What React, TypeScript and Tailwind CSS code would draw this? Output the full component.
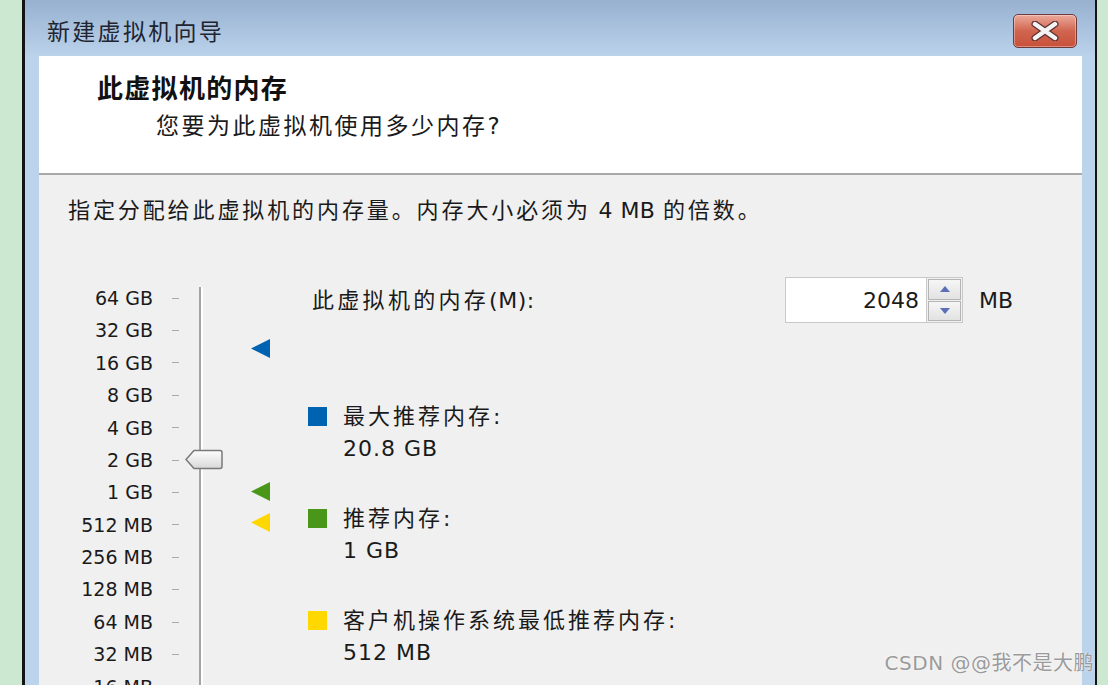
import React from "react";

const scale = [
  "64 GB", "32 GB", "16 GB", "8 GB", "4 GB", "2 GB", "1 GB",
  "512 MB", "256 MB", "128 MB", "64 MB", "32 MB", "16 MB",
];

const Marker = ({ color, top }: { color: string; top: string }) => (
  <svg className={`absolute left-[212px] ${top}`} width="19" height="19" viewBox="0 0 19 19">
    <polygon points="19,0 19,19 0,9.5" fill={color} />
  </svg>
);

const Legend = ({ color, title, value }: { color: string; title: string; value: string }) => (
  <div className="flex items-start gap-[16px]">
    <div className={`mt-[6px] h-[19px] w-[19px] ${color}`} />
    <div className="flex flex-col text-[22px] leading-[31.5px] text-[#1a1a1a]">
      <span className="tracking-[3px]">{title}</span>
      <span className="tracking-[1px]">{value}</span>
    </div>
  </div>
);

export default function App() {
  return (
    <div className="relative flex h-[685px] w-[1108px] overflow-hidden bg-[#cde8d0] font-['DejaVu_Sans','Noto_Sans_CJK_SC',sans-serif]">
      <div className="w-[22px] shrink-0" />
      <div className="w-[3px] shrink-0 bg-[#141414]" />

      {/* window */}
      <div className="flex w-[1070px] shrink-0 flex-col overflow-hidden bg-[#bcd3ec]">
        {/* title bar */}
        <div className="flex h-[56px] shrink-0 items-start justify-between bg-gradient-to-b from-[#97b1cf] to-[#bbd2eb] pl-[22px] pr-[18px]">
          <span className="mt-[17px] text-[23px] leading-[30px] tracking-[2.3px] text-[#1e2430]">新建虚拟机向导</span>
          <div className="mt-[14px] flex h-[34px] w-[64px] items-center justify-center rounded-[5px] border border-[#6e3a3a] bg-gradient-to-b from-[#eba99c] via-[#d0654f] to-[#c8503a] shadow-[inset_0_0_0_1px_rgba(255,255,255,0.35)]">
            <svg width="30" height="20" viewBox="0 0 30 20">
              <path d="M5 3 L25 17 M25 3 L5 17" stroke="#5b3030" strokeWidth="7" strokeLinecap="round" />
              <path d="M5 3 L25 17 M25 3 L5 17" stroke="#f4f4f4" strokeWidth="4.5" strokeLinecap="round" />
            </svg>
          </div>
        </div>

        <div className="flex flex-1">
          <div className="w-[14px] shrink-0" />
          <div className="flex flex-1 flex-col">
            {/* header */}
            <div className="h-[117px] shrink-0 bg-white pl-[58px] pt-[18px]">
              <div className="text-[26px] font-bold leading-[30px] tracking-[1.3px] text-[#111]">此虚拟机的内存</div>
              <div className="mt-[7px] pl-[59px] text-[23px] leading-[30px] tracking-[2.5px] text-[#1a1a1a]">
                您要为此虚拟机使用多少内存<span className="tracking-normal">?</span>
              </div>
            </div>
            <div className="h-[2px] shrink-0 bg-[#a8a8a8]" />

            {/* content */}
            <div className="flex-1 bg-[#f0f0f0]">
              <div className="pl-[29px] pt-[21px] text-[22px] leading-[30px] tracking-[2.9px] text-[#1a1a1a]">
                指定分配给此虚拟机的内存量。内存大小必须为<span className="tracking-[0.5px]"> 4 MB </span>的倍数。
              </div>

              <div className="mt-[51px] flex">
                {/* scale */}
                <div className="relative mt-[5px] w-[269px] shrink-0">
                  {scale.map((s) => (
                    <div key={s} className="flex h-[32.4px] items-center">
                      <span className="w-[114px] text-right text-[19px] text-[#1a1a1a]">{s}</span>
                      <span className="ml-[19px] h-px w-[7px] bg-[#a9a9a9]" />
                    </div>
                  ))}
                  <div className="absolute left-[160px] top-[5px] bottom-0 w-[4px] border-l-[2px] border-[#a3a3a3] bg-white" />
                  <svg className="absolute left-[146px] top-[167px]" width="38" height="21" viewBox="0 0 38 21">
                    <defs>
                      <linearGradient id="thumb" x1="0" y1="0" x2="0" y2="1">
                        <stop offset="0" stopColor="#fdfdfd" />
                        <stop offset="1" stopColor="#d8d8d8" />
                      </linearGradient>
                    </defs>
                    <path d="M1 10.5 L9 1.5 H35 Q37 1.5 37 3.5 V17.5 Q37 19.5 35 19.5 H9 Z" fill="url(#thumb)" stroke="#7a7a7a" strokeWidth="1.5" />
                  </svg>
                  <Marker color="#0063b1" top="top-[57px]" />
                  <Marker color="#4a9618" top="top-[200px]" />
                  <Marker color="#ffd700" top="top-[231px]" />
                </div>

                {/* right side */}
                <div className="flex flex-col">
                  <div className="flex items-center">
                    <span className="w-[477px] pl-[4px] text-[22px] tracking-[3.3px] text-[#1a1a1a]">
                      此虚拟机的内存<span className="tracking-[0.5px]">(M):</span>
                    </span>
                    <div className="flex h-[46px] w-[178px] border border-[#c9c9c9] bg-white">
                      <div className="flex flex-1 items-center justify-end pr-[7px] text-[22px] text-[#1a1a1a]">2048</div>
                      <div className="flex w-[36px] flex-col gap-[1px] border-l border-[#c9c9c9] bg-[#f0f0f0] p-[1px]">
                        <div className="flex flex-1 items-center justify-center border border-[#b4b4b4] bg-gradient-to-b from-[#f6f6f6] to-[#e2e2e2]">
                          <svg width="10" height="6" viewBox="0 0 10 6"><polygon points="5,0 10,6 0,6" fill="#5a6fb8" /></svg>
                        </div>
                        <div className="flex flex-1 items-center justify-center border border-[#b4b4b4] bg-gradient-to-b from-[#f6f6f6] to-[#e2e2e2]">
                          <svg width="10" height="6" viewBox="0 0 10 6"><polygon points="0,0 10,0 5,6" fill="#5a6fb8" /></svg>
                        </div>
                      </div>
                    </div>
                    <span className="ml-[16px] text-[22px] text-[#1a1a1a]">MB</span>
                  </div>

                  <div className="mt-[78px] flex flex-col gap-[39px]">
                    <Legend color="bg-[#0063b1]" title="最大推荐内存:" value="20.8 GB" />
                    <Legend color="bg-[#4a9618]" title="推荐内存:" value="1 GB" />
                    <Legend color="bg-[#ffd800]" title="客户机操作系统最低推荐内存:" value="512 MB" />
                  </div>
                </div>
              </div>
            </div>
          </div>
          <div className="w-[13px] shrink-0" />
        </div>
      </div>

      <div className="w-[2px] shrink-0 bg-[#141414]" />
      <div className="flex-1" />

      {/* watermark */}
      <div className="absolute right-[14px] top-[650px] text-[20px] leading-[26px] tracking-[0.5px] text-[#9b9b9b] [text-shadow:0_0_2px_#ffffff]">
        CSDN @@我不是大鹏
      </div>
    </div>
  );
}
